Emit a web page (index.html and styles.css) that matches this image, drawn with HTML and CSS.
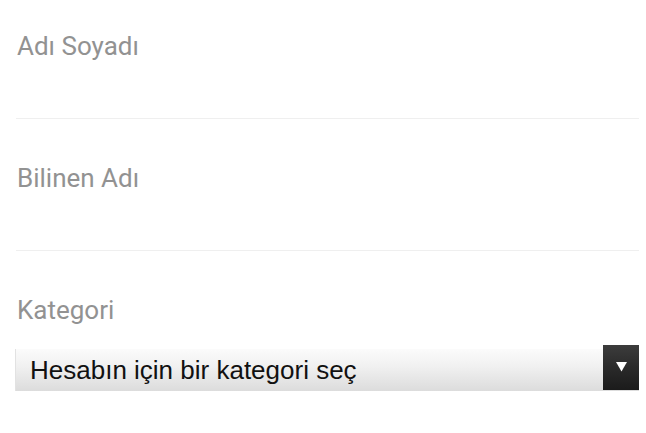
FILE: index.html
```html
<!DOCTYPE html>
<html lang="tr">
<head>
<meta charset="utf-8">
<title>Profil</title>
<link rel="stylesheet" href="styles.css">
</head>
<body>
<main class="form">
  <div class="field field-first">
    <div class="label">Adı Soyadı</div>
    <div class="input-space"></div>
  </div>
  <div class="field">
    <div class="label">Bilinen Adı</div>
    <div class="input-space"></div>
  </div>
  <div class="field field-last">
    <div class="label">Kategori</div>
    <div class="select">
      <span class="select-text">Hesabın için bir kategori seç</span>
      <span class="select-btn">
        <svg width="11" height="10" viewBox="0 0 11 10"><polygon points="0,0 11,0 5.5,9.5" fill="#ffffff"/></svg>
      </span>
    </div>
  </div>
</main>
</body>
</html>
```

FILE: styles.css
```css
html, body {
  margin: 0;
  padding: 0;
  background: #ffffff;
}

.form {
  padding: 0 7px 0 16px;
}

.field {
  padding-top: 44px;
  border-bottom: 1px solid #efefef;
}

.field-first {
  padding-top: 31px;
}

.field-last {
  border-bottom: none;
}

.label {
  font-family: Roboto, "Liberation Sans", sans-serif;
  font-size: 26px;
  line-height: 30px;
  height: 30px;
  color: #929292;
  padding-left: 1px;
}

.input-space {
  height: 57px;
}

.select {
  margin-top: 24px;
  height: 42px;
  display: flex;
  align-items: flex-end;
  margin-left: -1px;
  background: linear-gradient(to bottom, #fbfbfb 0%, #f1f1f1 40%, #dcdcdc 100%);
  box-shadow: inset 1px 0 0 #e2e2e2;
}

.select-text {
  flex: 1;
  align-self: stretch;
  font-family: "Liberation Sans", Arial, sans-serif;
  font-size: 26px;
  line-height: 42px;
  color: #111111;
  padding-left: 15px;
  white-space: nowrap;
}

.select-btn {
  width: 36px;
  height: 45px;
  margin-bottom: 1px;
  display: flex;
  justify-content: center;
  align-items: flex-start;
  padding-top: 17px;
  box-sizing: border-box;
  background: linear-gradient(to bottom, #3c3c3c 0%, #2a2a2a 50%, #1b1b1b 100%);
}

.select-btn svg {
  display: block;
}
```
